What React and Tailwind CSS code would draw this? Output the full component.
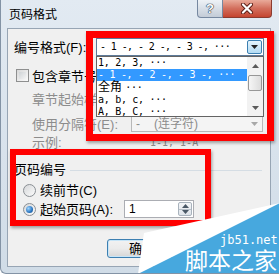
import React from "react";

const cjk = "font-['Liberation_Sans','Noto_Sans_CJK_SC',sans-serif]";
const mono = "font-['DejaVu_Sans_Mono','Noto_Sans_CJK_SC',monospace]";

const listItems = [
  { id: 1, label: "1, 2, 3, ···" },
  { id: 2, label: "- 1 -, - 2 -, - 3 -, ···", selected: true },
  { id: 3, label: "···", prefix: "全角" },
  { id: 4, label: "a, b, c, ···" },
  { id: 5, label: "A, B, C, ···" },
];

function Arrow({ up, color = "#222", className = "" }) {
  return (
    <svg width="7" height="4" viewBox="0 0 7 4" className={className}>
      <path d={up ? "M0 4 L3.5 0 L7 4 Z" : "M0 0 L7 0 L3.5 4 Z"} fill={color} />
    </svg>
  );
}

function Radio({ checked }) {
  return (
    <span className="flex h-[13px] w-[13px] items-center justify-center rounded-full border border-[#8a8f94] bg-linear-to-br from-[#d6d8da] to-[#fbfbfb]">
      {checked && (
        <span className="h-[7px] w-[7px] rounded-full bg-[radial-gradient(circle_at_35%_35%,#9fd6ff,#2a75c0_60%,#144a85)]" />
      )}
    </span>
  );
}

function Label({ text, hotkey, colon = true, gray }) {
  return (
    <span className={`whitespace-nowrap text-[13px] leading-[16px] ${gray ? "text-[#8c8c8c]" : "text-black"}`}>
      {text}
      {hotkey && (
        <>
          (<u className="no-underline">{hotkey}</u>)
        </>
      )}
      {colon && ":"}
    </span>
  );
}

export default function App() {
  return (
    <div className={`relative h-[274px] w-[279px] overflow-hidden rounded-bl-[6px] border-b border-l border-[#8393a5] bg-linear-to-b from-[#e2eaf2] to-[#d0dce7] ${cjk}`}>
      {/* Title bar */}
      <div className="flex h-[28px] items-start">
        <div className="pl-[8px] pt-[7px] text-[12px] leading-[16px] text-black">页码格式</div>
        <div className="ml-auto mr-[7px] flex">
          <div className="flex h-[18px] w-[26px] items-center justify-center rounded-bl-[4px] border border-t-0 border-[#7688a0] bg-linear-to-b from-[#eef2f6] via-[#d8dfe7] to-[#c3ccd7] text-[13px] font-bold leading-none text-white [text-shadow:0_0_1px_#1d2e45,0_0_1px_#1d2e45,0_0_1px_#1d2e45]">
            ?
          </div>
          <div className="flex h-[18px] w-[49px] items-center justify-center rounded-br-[4px] border border-l-0 border-t-0 border-[#8b3b2f] bg-linear-to-b from-[#e9aa9a] via-[#d26e5c] to-[#c5442f]">
            <svg width="14" height="11" viewBox="0 0 14 11">
              <path d="M3 1.5 L11 9.5 M11 1.5 L3 9.5" stroke="#5a1c14" strokeWidth="4" strokeLinecap="round" />
              <path d="M3 1.5 L11 9.5 M11 1.5 L3 9.5" stroke="#ffffff" strokeWidth="2.2" strokeLinecap="round" />
            </svg>
          </div>
        </div>
      </div>

      {/* Dialog body */}
      <div className="relative ml-[6px] mr-[8px] h-[239px] border border-[#97a5b4] bg-[#f0f0f0] pl-[6px] pt-[9px]">
        {/* 编号格式 */}
        <div className="flex h-[18px] items-center">
          <div className="w-[82px]">
            <Label text="编号格式" hotkey="F" />
          </div>
          <div className="relative h-[18px] w-[168px]">
            <div className="flex h-full items-center border border-[#5d7a99] bg-white">
              <span className={`flex-1 whitespace-pre pl-[3px] text-[10px] leading-[12px] tracking-[-0.6px] text-black ${mono}`}>- 1 -, - 2 -, - 3 -, ···</span>
              <span className="mr-[1px] flex h-[14px] w-[15px] items-center justify-center rounded-[2px] border border-[#3c7fb1] bg-linear-to-b from-[#e5f4fc] to-[#b3dbf3]">
                <Arrow />
              </span>
            </div>
            {/* open dropdown list */}
            <div className="absolute left-0 top-full z-10 flex h-[61px] w-[168px] border border-[#646464] bg-white">
              <div className="flex-1">
                {listItems.map((item) => (
                  <div
                    key={item.id}
                    className={`flex items-center whitespace-pre pl-[1px] ${item.prefix ? "h-[13px]" : "h-[12px]"} ${
                      item.selected ? "bg-[#3399ff] text-white" : "text-black"
                    }`}
                  >
                    {item.prefix && <span className={`text-[12px] leading-[13px] ${cjk}`}>{item.prefix} </span>}
                    <span className={`text-[10px] leading-[12px] tracking-[-0.3px] ${mono}`}>{item.label}</span>
                  </div>
                ))}
              </div>
              <div className="flex w-[16px] flex-col bg-[#f2f2f2]">
                <div className="flex h-[17px] items-center justify-center">
                  <Arrow up color="#5a5a5a" />
                </div>
                <div className="mx-[1px] mt-[1px] h-[16px] rounded-[2px] border border-[#979797] bg-linear-to-r from-[#f6f6f6] to-[#dcdcdc]" />
                <div className="flex-1" />
                <div className="flex h-[17px] items-center justify-center">
                  <Arrow color="#5a5a5a" />
                </div>
              </div>
            </div>
          </div>
        </div>

        {/* 包含章节号 */}
        <div className="mt-[11px] flex h-[17px] items-center">
          <span className="ml-[2px] h-[13px] w-[13px] border border-[#8e8f8f] bg-linear-to-br from-[#d8d8d8] to-[#fbfbfb] p-[2px]">
            <span className="block h-full w-full bg-linear-to-br from-[#cfd3d6] to-[#f4f4f4]" />
          </span>
          <span className="ml-[3px]">
            <Label text="包含章节号" hotkey="N" colon={false} />
          </span>
        </div>

        {/* 章节起始样式 */}
        <div className="mt-[8px] flex h-[16px] items-center pl-[18px]">
          <Label text="章节起始样式" hotkey="P" gray />
        </div>

        {/* 使用分隔符 */}
        <div className="mt-[8px] flex h-[16px] items-center">
          <div className="w-[117px] pl-[18px]">
            <Label text="使用分隔符" hotkey="E" gray />
          </div>
          <div className="flex h-[16px] w-[132px] items-center border border-[#b8b8b8] bg-[#f4f4f4] text-[12px] leading-[14px] text-[#8c8c8c]">
            <span className="w-[22px] pl-[4px]">-</span>
            <span className="flex-1">(连字符)</span>
            <span className="flex w-[15px] items-center justify-center">
              <Arrow color="#a8a8a8" />
            </span>
          </div>
        </div>

        {/* 示例 */}
        <div className="mt-[2px] flex h-[16px] items-center">
          <div className="w-[136px] pl-[18px]">
            <Label text="示例" gray />
          </div>
          <span className={`mt-[2px] text-[10px] leading-[12px] text-[#8c8c8c] ${mono}`}>1-1, 1-A</span>
        </div>

        {/* 页码编号 group */}
        <div className="mt-[12px] flex h-[16px] items-center">
          <Label text="页码编号" colon={false} />
          <span className="ml-[4px] mr-[8px] h-px flex-1 bg-[#d5dde4]" />
        </div>

        <div className="mt-[4px] flex h-[16px] items-center pl-[9px]">
          <Radio />
          <span className="ml-[4px]">
            <Label text="续前节" hotkey="C" colon={false} />
          </span>
        </div>

        <div className="mt-[2px] flex h-[18px] items-center">
          <div className="flex w-[110px] items-center pl-[9px]">
            <Radio checked />
            <span className="ml-[4px]">
              <Label text="起始页码" hotkey="A" />
            </span>
          </div>
          <div className="flex h-[18px] w-[70px] items-center border border-[#abadb3] bg-white">
            <span className="flex-1 pl-[4px] text-[12px] leading-[14px] text-black">1</span>
            <span className="mr-[1px] flex h-[14px] w-[14px] flex-col rounded-[2px] border border-[#a9b3bd] bg-linear-to-b from-[#f4f6f8] to-[#dfe4ea]">
              <span className="flex flex-1 items-center justify-center border-b border-[#b7c0c9]">
                <Arrow up color="#4a5866" />
              </span>
              <span className="flex flex-1 items-center justify-center">
                <Arrow color="#4a5866" />
              </span>
            </span>
          </div>
        </div>

        {/* buttons */}
        <div className="mt-[21px] flex h-[19px] pl-[93px]">
          <div className="flex w-[70px] items-center justify-center rounded-[3px] border border-[#3c7fb1] bg-linear-to-b from-[#f2f2f2] via-[#ebebeb] to-[#d6d6d6] text-[13px] leading-[16px] text-black shadow-[inset_0_0_0_1px_#c6e5f8]">
            确定
          </div>
          <div className="ml-[7px] flex w-[70px] items-center justify-center rounded-[3px] border border-[#707070] bg-linear-to-b from-[#f2f2f2] to-[#d6d6d6] text-[13px] leading-[16px] text-black">
            取消
          </div>
        </div>
      </div>

      {/* red annotation boxes */}
      <div className="pointer-events-none absolute left-[85px] top-[31px] h-[110px] w-[188px] border-[7px] border-[#ff0000] shadow-[1px_2px_3px_rgba(0,0,0,0.35)]" />
      <div className="pointer-events-none absolute left-[9px] top-[149px] h-[77px] w-[201px] border-[6px] border-[#ff0000] shadow-[1px_2px_3px_rgba(0,0,0,0.35)]" />

      {/* watermark */}
      <svg className="pointer-events-none absolute left-0 top-0" width="279" height="274" viewBox="0 0 279 274">
        <polygon points="143,233 279,203 279,205 137,274" fill="#ffffff" />
        <polygon points="279,203 279,274 137,274" fill="#47a8de" />
      </svg>
      <div className={`pointer-events-none absolute left-[219px] top-[234px] text-[12px] leading-[13px] text-white ${mono}`}>jb51.net</div>
      <div className="pointer-events-none absolute left-[184px] top-[248px] font-['Noto_Sans_CJK_SC',sans-serif] text-[23px] leading-[23px] text-white">
        脚本之家
      </div>
    </div>
  );
}
